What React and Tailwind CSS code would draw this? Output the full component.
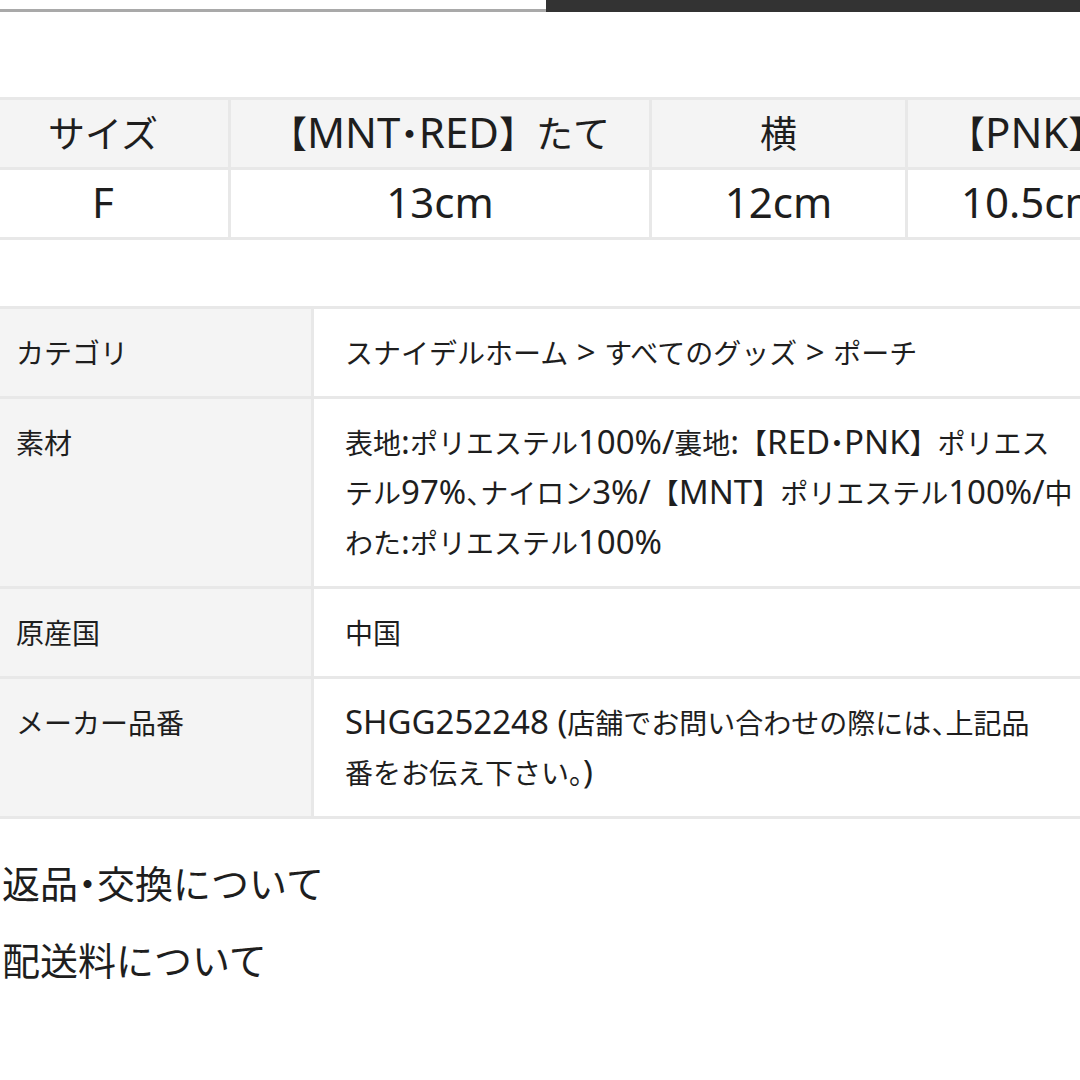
function Mixed({ text, latin }) {
  const parts = text.split(/([A-Za-z0-9%\/().:> ]+|[・、])/).filter((p) => p !== "");
  return (
    <>
      {parts.map((p, i) => {
        if (/^[・、]$/.test(p)) {
          return (
            <span key={i} className="[font-feature-settings:'halt']">
              {p}
            </span>
          );
        }
        if (/^[A-Za-z0-9%\/().:> ]+$/.test(p)) {
          return (
            <span key={i} className={latin}>
              {p}
            </span>
          );
        }
        return <span key={i}>{p}</span>;
      })}
    </>
  );
}

export default function App() {
  const font = { fontFamily: '"Noto Sans", "Noto Sans CJK JP", sans-serif' };
  const sizeHead = ["サイズ", "【MNT・RED】たて", "横"];
  const sizeRow = ["F", "13cm", "12cm"];
  const info = [
    { label: "カテゴリ", lines: ["スナイデルホーム > すべてのグッズ > ポーチ"] },
    {
      label: "素材",
      lines: [
        "表地:ポリエステル100%/裏地:【RED・PNK】ポリエス",
        "テル97%、ナイロン3%/【MNT】ポリエステル100%/中",
        "わた:ポリエステル100%",
      ],
    },
    { label: "原産国", lines: ["中国"] },
    {
      label: "メーカー品番",
      lines: ["SHGG252248 (店舗でお問い合わせの際には、上記品", "番をお伝え下さい。)"],
    },
  ];
  const sizeLatin = "text-[42px] leading-none";
  const infoLatin = "text-[33px] leading-none";
  return (
    <div className="w-[1080px] h-[1080px] overflow-hidden bg-white text-[#1e1e1e]" style={font}>
      <div className="flex h-[12px]">
        <div className="flex-1 flex flex-col justify-end">
          <div className="h-[3px] bg-[#a9a9a9]" />
        </div>
        <div className="w-[534px] bg-[#333333]" />
      </div>

      <div className="mt-[85px] ml-[-25px] w-max bg-[#e8e8e8] p-[3px]">
        <div className="grid grid-cols-[250px_418px_253px_418px] gap-[3px]">
          {sizeHead.map((t, i) => (
            <div key={"h" + i} className="h-[67px] bg-[#f4f4f4] flex items-center justify-center text-[37px] whitespace-nowrap">
              <div>
                <Mixed text={t} latin={sizeLatin} />
              </div>
            </div>
          ))}
          <div className="h-[67px] bg-[#f4f4f4] flex items-center pl-[40px] text-[37px] whitespace-nowrap">
            <div>
              <Mixed text="【PNK】たて" latin={sizeLatin} />
            </div>
          </div>
          {sizeRow.map((t, i) => (
            <div key={"r" + i} className="h-[67px] bg-white flex items-center justify-center text-[37px] whitespace-nowrap">
              <div>
                <Mixed text={t} latin={sizeLatin} />
              </div>
            </div>
          ))}
          <div className="h-[67px] bg-white flex items-center pl-[53px] text-[37px] whitespace-nowrap">
            <div>
              <Mixed text="10.5cm" latin={sizeLatin} />
            </div>
          </div>
        </div>
      </div>

      <div className="mt-[66px] w-[1200px] bg-[#e8e8e8] py-[3px]">
        <div className="grid grid-cols-[311px_1fr] gap-[3px]">
          {info.map((r) => (
            <div key={r.label} className="contents">
              <div className="bg-[#f4f4f4] pl-[16px] pt-[19px] pb-[18px] text-[28px] leading-[50px] whitespace-nowrap">
                {r.label}
              </div>
              <div className="bg-white pl-[31px] pt-[19px] pb-[18px] text-[28px] leading-[50px]">
                {r.lines.map((l, i) => (
                  <div key={i} className="whitespace-nowrap h-[50px]">
                    <Mixed text={l} latin={infoLatin} />
                  </div>
                ))}
              </div>
            </div>
          ))}
        </div>
      </div>

      <div className="mt-[26px] pl-[2px] text-[38px] leading-[77px]">
        <div>
          <Mixed text="返品・交換について" latin="" />
        </div>
        <div>配送料について</div>
      </div>
    </div>
  );
}
